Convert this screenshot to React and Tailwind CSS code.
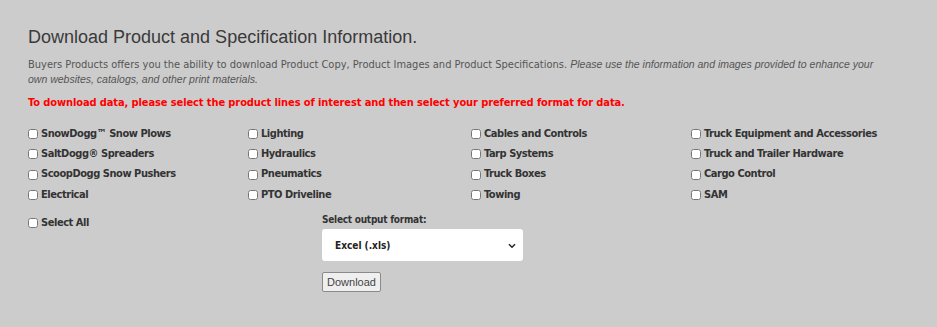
import React from 'react';

const COLUMNS = [
  ['SnowDogg™ Snow Plows', 'SaltDogg® Spreaders', 'ScoopDogg Snow Pushers', 'Electrical'],
  ['Lighting', 'Hydraulics', 'Pneumatics', 'PTO Driveline'],
  ['Cables and Controls', 'Tarp Systems', 'Truck Boxes', 'Towing'],
  ['Truck Equipment and Accessories', 'Truck and Trailer Hardware', 'Cargo Control', 'SAM'],
];

const Check = ({ label }) => (
  <label className="flex items-center h-[20.3px] text-[11px] tracking-[-0.45px] font-bold text-[#333] whitespace-nowrap">
    <input type="checkbox" className="m-0 mr-[3px] w-[10px] h-[10px]" />
    <span>{label}</span>
  </label>
);

const App = () => {
  return (
    <div className="w-[937px] h-[327px] bg-[#cccccc] pl-[28px] pt-[26px] font-['DejaVu_Sans_Condensed','DejaVu_Sans',Verdana,sans-serif] [font-stretch:condensed]">
      <h1 className="font-['Liberation_Sans',Arial,sans-serif] [font-stretch:normal] text-[18px] leading-[22px] text-[#3a3a3a]">
        Download Product and Specification Information.
      </h1>
      <p className="mt-[9px] w-[860px] text-[11px] leading-[15px] text-[#555]">
        Buyers Products offers you the ability to download Product Copy, Product Images and Product Specifications.{' '}
        <em className="font-['Liberation_Sans',Arial,sans-serif] [font-stretch:normal] text-[10.5px]">
          Please use the information and images provided to enhance your own websites, catalogs, and other print materials.
        </em>
      </p>
      <p className="mt-[8px] text-[11px] tracking-[-0.1px] leading-[15px] font-bold text-[#ff0000]">
        To download data, please select the product lines of interest and then select your preferred format for data.
      </p>
      <div className="mt-[14px] flex">
        {COLUMNS.map((col, i) => (
          <div key={i} className={i === 1 ? 'w-[223px] flex flex-col' : 'w-[220px] flex flex-col'}>
            {col.map((l) => (
              <Check key={l} label={l} />
            ))}
          </div>
        ))}
      </div>
      <div className="flex mt-[8px]">
        <div className="w-[294px]">
          <Check label="Select All" />
        </div>
        <div className="flex flex-col">
          <div className="text-[10px] tracking-[-0.25px] font-bold text-[#333] leading-[14px] mt-[0px]">Select output format:</div>
          <div className="relative mt-[2px] w-[201px] h-[32px] bg-white rounded-[3px] flex items-center pl-[13px] text-[10px] font-bold text-[#222]">
            Excel (.xls)
            <svg className="absolute right-[7px] top-[14px]" width="8" height="6" viewBox="0 0 8 6">
              <path d="M1 1.2 L4 4.2 L7 1.2" fill="none" stroke="#222" strokeWidth="1.5" />
            </svg>
          </div>
          <button className="mt-[11px] w-[59px] h-[20px] bg-[#efefef] border border-[#8a8a8a] rounded-[2px] text-[11px] text-[#444] font-['Liberation_Sans',Arial,sans-serif] [font-stretch:normal] leading-none">
            Download
          </button>
        </div>
      </div>
    </div>
  );
};

export default App;
